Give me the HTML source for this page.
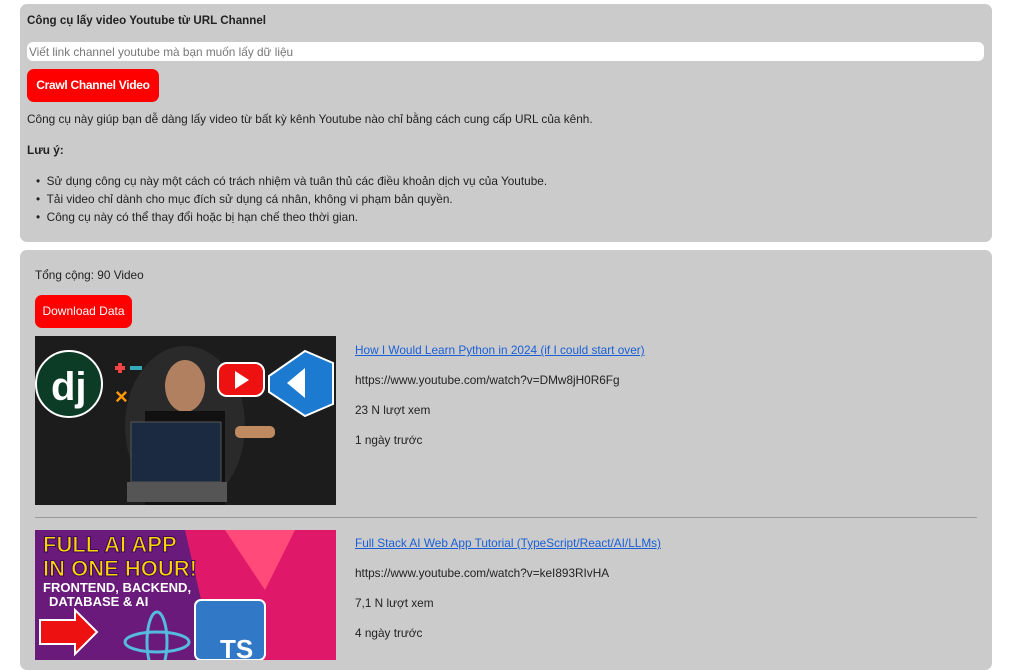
<!DOCTYPE html>
<html><head><meta charset="utf-8"><style>
body{margin:0;background:#fff;font-family:"Liberation Sans","DejaVu Sans",sans-serif;font-size:11.8px;color:#222;}
.p{position:absolute;left:20px;width:972px;background:#cbcbcb;border-radius:7px;}
.a{position:absolute;white-space:nowrap;}
.btn{position:absolute;background:#f00;color:#fff;border-radius:7px;text-align:center;}
a{color:#1a5fd6;text-decoration:underline;}
</style></head><body>
<div class="p" style="top:4px;height:238px"></div>
<div class="a" style="left:27px;top:14px;font-weight:bold;font-size:11.6px">Công cụ lấy video Youtube từ URL Channel</div>
<div class="a" style="left:27px;top:42px;width:957px;height:19px;background:#fff;border-radius:6px"></div>
<div class="a" style="left:29px;top:45px;color:#777">Viết link channel youtube mà bạn muốn lấy dữ liệu</div>
<div class="btn" style="left:27px;top:69px;width:132px;height:33px;line-height:33px;font-weight:bold;font-size:12px;letter-spacing:-0.3px">Crawl Channel Video</div>
<div class="a" style="left:27px;top:112px">Công cụ này giúp bạn dễ dàng lấy video từ bất kỳ kênh Youtube nào chỉ bằng cách cung cấp URL của kênh.</div>
<div class="a" style="left:27px;top:143px;font-weight:bold">Lưu ý:</div>
<div class="a" style="left:36px;top:172px;line-height:18px">• &nbsp;Sử dụng công cụ này một cách có trách nhiệm và tuân thủ các điều khoản dịch vụ của Youtube.<br>• &nbsp;Tải video chỉ dành cho mục đích sử dụng cá nhân, không vi phạm bản quyền.<br>• &nbsp;Công cụ này có thể thay đổi hoặc bị hạn chế theo thời gian.</div>
<div class="p" style="top:250px;height:420px"></div>
<div class="a" style="left:35px;top:268px">Tổng cộng: 90 Video</div>
<div class="btn" style="left:35px;top:295px;width:97px;height:33px;line-height:33px;font-size:12px">Download Data</div>
<svg class="a" style="left:35px;top:336px" width="301" height="169">
<rect width="301" height="169" fill="#1c1c1c"/>
<ellipse cx="150" cy="90" rx="60" ry="80" fill="#2a2a2a"/>
<circle cx="34" cy="48" r="33" fill="#0c3c26" stroke="#fff" stroke-width="2"/>
<text x="16" y="64" fill="#fff" font-size="40" font-weight="bold">dj</text>
<rect x="80" y="30" width="10" height="4" fill="#e44"/><rect x="83" y="27" width="4" height="10" fill="#e44"/>
<rect x="95" y="30" width="12" height="4" fill="#3ab"/>
<text x="80" y="68" fill="#f90" font-size="22" font-weight="bold">×</text>
<ellipse cx="150" cy="50" rx="20" ry="26" fill="#b08060"/>
<rect x="110" y="75" width="80" height="94" fill="#111"/>
<rect x="96" y="86" width="90" height="60" fill="#1b2a40" stroke="#555"/>
<rect x="92" y="146" width="100" height="20" fill="#555"/>
<rect x="183" y="27" width="46" height="33" rx="9" fill="#e11" stroke="#fff" stroke-width="2"/>
<polygon points="200,35 200,53 214,44" fill="#fff"/>
<polygon points="234,40 270,15 298,27 298,68 270,80 234,56" fill="#1c7ad0" stroke="#fff" stroke-width="2"/>
<polygon points="270,32 270,62 252,47" fill="#fff"/>
<rect x="200" y="90" width="40" height="12" rx="5" fill="#c08a60"/>
</svg>
<div class="a" style="left:355px;top:343px"><a>How I Would Learn Python in 2024 (if I could start over)</a></div>
<div class="a" style="left:355px;top:373px">https://www.youtube.com/watch?v=DMw8jH0R6Fg</div>
<div class="a" style="left:355px;top:403px">23 N lượt xem</div>
<div class="a" style="left:355px;top:433px">1 ngày trước</div>
<div class="a" style="left:35px;top:517px;width:942px;height:1px;background:#999"></div>
<svg class="a" style="left:35px;top:530px" width="301" height="130">
<rect width="301" height="130" fill="#6a1a7a"/>
<polygon points="150,0 301,0 301,130 180,130" fill="#e0186a"/>
<polygon points="190,0 260,0 230,60" fill="#ff4a7a"/>
<text x="8" y="22" fill="#ffd400" font-size="22" font-weight="bold" stroke="#3a0a5a" stroke-width="1">FULL AI APP</text>
<text x="8" y="46" fill="#ffd400" font-size="22" font-weight="bold" stroke="#3a0a5a" stroke-width="1">IN ONE HOUR!</text>
<text x="8" y="62" fill="#fff" font-size="13" font-weight="bold">FRONTEND, BACKEND,</text>
<text x="14" y="76" fill="#fff" font-size="13" font-weight="bold">DATABASE &amp; AI</text>
<polygon points="5,90 40,90 40,80 62,102 40,124 40,114 5,114" fill="#e11" stroke="#fff" stroke-width="2"/>
<ellipse cx="122" cy="112" rx="32" ry="10" fill="none" stroke="#5bd" stroke-width="3"/>
<ellipse cx="122" cy="112" rx="10" ry="30" fill="none" stroke="#5bd" stroke-width="3"/>
<rect x="160" y="70" width="70" height="60" rx="6" fill="#3178c6" stroke="#fff" stroke-width="2"/>
<text x="185" y="128" fill="#fff" font-size="26" font-weight="bold">TS</text>
</svg>
<div class="a" style="left:355px;top:536px"><a>Full Stack AI Web App Tutorial (TypeScript/React/AI/LLMs)</a></div>
<div class="a" style="left:355px;top:566px">https://www.youtube.com/watch?v=keI893RIvHA</div>
<div class="a" style="left:355px;top:596px">7,1 N lượt xem</div>
<div class="a" style="left:355px;top:626px">4 ngày trước</div>
</body></html>
